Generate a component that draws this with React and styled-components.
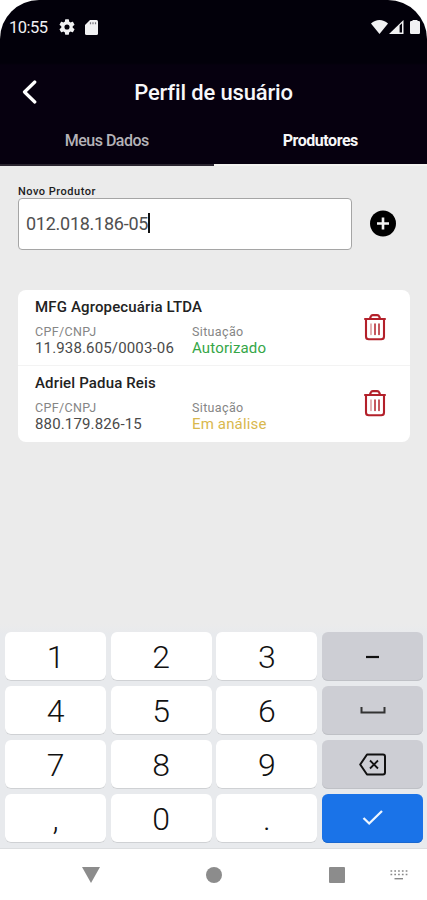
import React from "react";
import styled, { createGlobalStyle } from "styled-components";

const GlobalStyle = createGlobalStyle`
  * { box-sizing: border-box; }
  body { margin: 0; background: #fff; font-family: Roboto, "Liberation Sans", sans-serif; }
  button { font: inherit; border: 0; padding: 0; margin: 0; background: none; }
  svg { display: block; flex: none; }
`;

const Screen = styled.div`
  width: 427px;
  height: 900px;
  overflow: hidden;
  display: flex;
  flex-direction: column;
  background: #ebebeb;
`;

const Top = styled.header`
  height: 166px;
  flex: none;
  background: #fff;
`;

const TopFill = styled.div`
  height: 166px;
  display: flex;
  flex-direction: column;
  background: linear-gradient(#02000a 0, #02000a 63px, #06000f 65px);
  border-radius: 39px 39px 0 0;
`;

const StatusBar = styled.div`
  height: 54px;
  padding: 0 7px 0 9px;
  display: flex;
  align-items: center;
  color: #f1f1f3;
`;

const Clock = styled.span`
  width: 50px;
  padding-top: 1px;
  font-size: 16.5px;
  font-weight: 450;
  letter-spacing: -0.5px;
`;

const StatusIcons = styled.div`
  display: flex;
  align-items: center;
  gap: ${(p) => p.$gap}px;
  margin-left: ${(p) => (p.$end ? "auto" : "0")};
`;

const TitleRow = styled.div`
  height: 76px;
  display: grid;
  grid-template-columns: 60px 1fr 60px;
  align-items: center;
`;

const Back = styled.button`
  padding: 0 0 1px 22px;
  color: #fff;
`;

const Title = styled.h1`
  margin: 0;
  padding-top: 1px;
  text-align: center;
  color: #f7f7f9;
  font-size: 22px;
  line-height: 26px;
  font-weight: 500;
  letter-spacing: -0.15px;
`;

const Tabs = styled.nav`
  height: 36px;
  display: flex;
`;

const Tab = styled.button`
  flex: 1;
  height: 36px;
  padding-bottom: 13px;
  text-align: center;
  font-size: 16px;
  line-height: 18px;
  font-weight: ${(p) => (p.$active ? 700 : 500)};
  letter-spacing: ${(p) => (p.$active ? "-0.45px" : "-0.5px")};
  color: ${(p) => (p.$active ? "#f7f7f8" : "#b4b2b7")};
  border-bottom: 2px solid ${(p) => (p.$active ? "#f3f3f0" : "#2a2530")};
`;

const Content = styled.main`
  flex: 1;
  padding: 18px 17px 0 18px;
`;

const Label = styled.label`
  display: block;
  height: 14px;
  font-size: 11px;
  line-height: 15px;
  font-weight: 500;
  letter-spacing: 0.5px;
  color: #1c1c1c;
`;

const InputRow = styled.div`
  height: 52px;
  display: flex;
  align-items: center;
  gap: 17px;
`;

const Field = styled.div`
  width: 334px;
  height: 52px;
  padding: 0 0 2px 7px;
  display: flex;
  align-items: center;
  background: #fff;
  border: 1px solid #a5a5a5;
  border-radius: 4px;
  color: #505050;
  font-size: 18px;
  letter-spacing: -0.26px;
`;

const Caret = styled.span`
  width: 2px;
  height: 20px;
  background: #111;
`;

const Card = styled.section`
  margin-top: 40px;
  width: 392px;
  height: 152px;
  background: #fff;
  border-radius: 8px;
`;

const Producer = styled.article`
  height: 75px;
  padding: 8px 21px 0 17px;
  display: grid;
  grid-template-columns: 157px 1fr 26px;
  grid-template-rows: 18px 1fr;
  & + & { height: 77px; border-top: 1px solid #f3f3f3; }
`;

const Name = styled.h2`
  margin: 0;
  grid-column: 1 / 3;
  font-size: 15px;
  line-height: 18px;
  font-weight: 500;
  letter-spacing: 0.15px;
  color: #222;
`;

const Info = styled.div`
  grid-row: 2;
  padding-top: 8px;
  color: ${(p) => p.$color || "#4a4a4a"};
  font-size: 15px;
  line-height: 18px;
  letter-spacing: 0.15px;
  white-space: nowrap;
`;

const InfoLabel = styled.div`
  font-size: 12.5px;
  line-height: 15px;
  letter-spacing: 0.35px;
  color: #858585;
`;

const Remove = styled.button`
  grid-column: 3;
  grid-row: 1 / 3;
  align-self: start;
  padding-top: 15px;
`;

const Keyboard = styled.div`
  height: 225px;
  padding: 8px 4px 0 5px;
  display: grid;
  grid-template-columns: repeat(4, 101px);
  grid-auto-rows: 49px;
  column-gap: 4.7px;
  row-gap: 5px;
  background: linear-gradient(#ebebeb 0, #e8eaed 10px);
  border-bottom: 1px solid #dcdee0;
`;

const tones = {
  digit: { bg: "#fff", shadow: "#cfd1d4" },
  action: { bg: "#cdced4", shadow: "#bfc1c6" },
  enter: { bg: "#1a73e8", shadow: "#1a68d0" },
};

const Key = styled.button`
  display: flex;
  align-items: center;
  justify-content: center;
  padding-bottom: ${(p) => (p.$tone === "digit" ? 0 : 1)}px;
  border-radius: 6px;
  background: ${(p) => tones[p.$tone].bg};
  box-shadow: inset 0 -1px 0 ${(p) => tones[p.$tone].shadow};
  color: #111;
  font-size: 32px;
  font-weight: 350;
  line-height: 36px;
`;

const NavBar = styled.footer`
  height: 51px;
  display: flex;
  align-items: center;
  background: #fff;
`;

const NavSlot = styled.div`
  flex: none;
  width: ${(p) => p.$width}px;
  display: flex;
  justify-content: ${(p) => (p.$end ? "flex-end" : "center")};
`;

const Gear = () => (
  <svg width="16" height="16" viewBox="2 2 20 20" fill="currentColor">
    <path fillRule="evenodd" d="M19.14 12.94a7.5 7.5 0 0 0 0-1.88l2.03-1.58a.5.5 0 0 0 .12-.61l-1.92-3.32a.5.5 0 0 0-.59-.22l-2.39.96a7 7 0 0 0-1.62-.94l-.36-2.54a.5.5 0 0 0-.48-.41h-3.84a.5.5 0 0 0-.48.41l-.36 2.54a7 7 0 0 0-1.62.94l-2.39-.96a.5.5 0 0 0-.59.22L2.73 8.87a.5.5 0 0 0 .12.61l2.03 1.58a7.5 7.5 0 0 0 0 1.88l-2.03 1.58a.5.5 0 0 0-.12.61l1.92 3.32a.5.5 0 0 0 .59.22l2.39-.96a7 7 0 0 0 1.62.94l.36 2.54a.5.5 0 0 0 .48.41h3.84a.5.5 0 0 0 .48-.41l.36-2.54a7 7 0 0 0 1.62-.94l2.39.96a.5.5 0 0 0 .59-.22l1.92-3.32a.5.5 0 0 0-.12-.61zM12 15.2a3.2 3.2 0 1 1 0-6.4 3.2 3.2 0 0 1 0 6.4z" />
  </svg>
);

const SdCard = () => (
  <svg width="13" height="15" viewBox="0 0 13 15">
    <path d="M5 0h6.5A1.5 1.5 0 0 1 13 1.5v12a1.5 1.5 0 0 1-1.5 1.5h-10A1.5 1.5 0 0 1 0 13.5V5z" fill="currentColor" />
    <path d="M5.5 2.2v2M8 2.2v2M10.5 2.2v2" stroke="#77757e" strokeWidth="1.2" />
  </svg>
);

const Wifi = () => (
  <svg width="17" height="14" viewBox="0 0 17 14" fill="currentColor">
    <path d="M0 3.6C4.8-1.1 12.2-1.1 17 3.6L8.5 14z" />
  </svg>
);

const Signal = () => (
  <svg width="15" height="14" viewBox="0 0 15 14">
    <path d="M0 14L14.5 0v14z" fill="currentColor" />
    <path d="M10.6 5.6L13 3.3v9.2h-2.4z" fill="#02000a" />
  </svg>
);

const Battery = () => (
  <svg width="10" height="14" viewBox="0 0 10 14" fill="currentColor">
    <path d="M2.5 0h5v1h1.3q1.2 0 1.2 1.2V12.800Q10 14 8.800 14H1.200Q0 14 0 12.800V2.200q0-1.200 1.200-1.200h1.300z" />
  </svg>
);

const Trash = () => (
  <svg width="24" height="28" viewBox="0 0 24 28" fill="none" stroke="#b3202a" strokeWidth="2.1" strokeLinecap="round" strokeLinejoin="round">
    <path d="M2 6H22M7 5.500L7.800 3.500Q8.300 2.100 9.800 2.100H14.200Q15.700 2.100 16.200 3.500L17 5.500M3 6.500V23.500Q3 26.300 5.800 26.300H18.200Q21 26.300 21 23.500V6.500" />
    <path d="M8 11V21.500" strokeWidth="1.400" opacity=".5" />
    <path d="M12 11V21.500M16 11V21.500" strokeWidth="1.500" />
  </svg>
);

const glyphs = {
  minus: (
    <svg width="26" height="28" viewBox="0 0 26 28">
      <path d="M6 15H19" stroke="#111" strokeWidth="2.2" />
    </svg>
  ),
  space: (
    <svg width="26" height="28" viewBox="0 0 26 28">
      <path d="M1.500 11V16.500H24.500V11" fill="none" stroke="#333" strokeWidth="2" />
    </svg>
  ),
  backspace: (
    <svg width="28" height="24" viewBox="0 0 28 24" fill="none" stroke="#111" strokeWidth="2">
      <path d="M8 2.500H24Q26 2.500 26 4.500V20.500Q26 22.500 24 22.500H8L1.200 12.500z" strokeLinejoin="round" />
      <path d="M11 8.500L19 16.500M19 8.500L11 16.500" strokeWidth="1.800" />
    </svg>
  ),
  check: (
    <svg width="22" height="18" viewBox="0 0 22 18">
      <path d="M1.500 9L7.200 14.500L20 2" fill="none" stroke="#eef6ff" strokeWidth="2.300" />
    </svg>
  ),
};

const KeyboardIcon = () => (
  <svg width="18" height="12" viewBox="0 0 18 12" stroke="#888" fill="none">
    <path d="M.5 2H18M.5 5.500H18" strokeWidth="1.600" strokeDasharray="1.700 2.100" />
    <path d="M4.500 9.700H13" strokeWidth="1.400" />
  </svg>
);

const keys = ["1", "2", "3", "minus", "4", "5", "6", "space", "7", "8", "9", "backspace", ",", "0", ".", "check"];

const producers = [
  { name: "MFG Agropecuária LTDA", doc: "11.938.605/0003-06", status: "Autorizado", color: "#35a647" },
  { name: "Adriel Padua Reis", doc: "880.179.826-15", status: "Em análise", color: "#d9b84e" },
];

export default function App() {
  return (
    <>
      <GlobalStyle />
      <Screen>
        <Top>
          <TopFill>
            <StatusBar>
              <Clock>10:55</Clock>
              <StatusIcons $gap={10}><Gear /><SdCard /></StatusIcons>
              <StatusIcons $gap={1} $end>
                <Wifi /><Signal />
                <StatusIcons $gap={0}><NavSlot $width={5} /><Battery /></StatusIcons>
              </StatusIcons>
            </StatusBar>
            <TitleRow>
              <Back aria-label="Voltar">
                <svg width="15" height="24" viewBox="0 0 15 24">
                  <path d="M12.8 2L2.500 12L12.800 22" fill="none" stroke="currentColor" strokeWidth="3.200" strokeLinecap="round" strokeLinejoin="round" />
                </svg>
              </Back>
              <Title>Perfil de usuário</Title>
            </TitleRow>
            <Tabs>
              <Tab>Meus Dados</Tab>
              <Tab $active>Produtores</Tab>
            </Tabs>
          </TopFill>
        </Top>
        <Content>
          <Label>Novo Produtor</Label>
          <InputRow>
            <Field>012.018.186-05<Caret /></Field>
            <button aria-label="Adicionar">
              <svg width="28" height="28" viewBox="0 0 28 28">
                <circle cx="14" cy="13.500" r="13" fill="#000" />
                <path d="M14 7.500V19.500M8 13.500H20" stroke="#f4f4f4" strokeWidth="2.600" />
              </svg>
            </button>
          </InputRow>
          <Card>
            {producers.map((p) => (
              <Producer key={p.doc}>
                <Name>{p.name}</Name>
                <Info><InfoLabel>CPF/CNPJ</InfoLabel>{p.doc}</Info>
                <Info $color={p.color}><InfoLabel>Situação</InfoLabel>{p.status}</Info>
                <Remove aria-label="Remover"><Trash /></Remove>
              </Producer>
            ))}
          </Card>
        </Content>
        <Keyboard>
          {keys.map((k) => (
            <Key key={k} $tone={k === "check" ? "enter" : glyphs[k] ? "action" : "digit"}>{glyphs[k] || k}</Key>
          ))}
        </Keyboard>
        <NavBar>
          <NavSlot $width={182}>
            <svg width="18" height="16" viewBox="0 0 18 16"><path d="M0 0H18L9 16z" fill="#8c8c8c" /></svg>
          </NavSlot>
          <NavSlot $width={64}>
            <svg width="16" height="16" viewBox="0 0 16 16"><circle cx="8" cy="8" r="8" fill="#8c8c8c" /></svg>
          </NavSlot>
          <NavSlot $width={99} $end>
            <svg width="16" height="16" viewBox="0 0 16 16"><rect width="16" height="16" rx="1" fill="#8c8c8c" /></svg>
          </NavSlot>
          <NavSlot $width={63} $end>
            <KeyboardIcon />
          </NavSlot>
        </NavBar>
      </Screen>
    </>
  );
}
